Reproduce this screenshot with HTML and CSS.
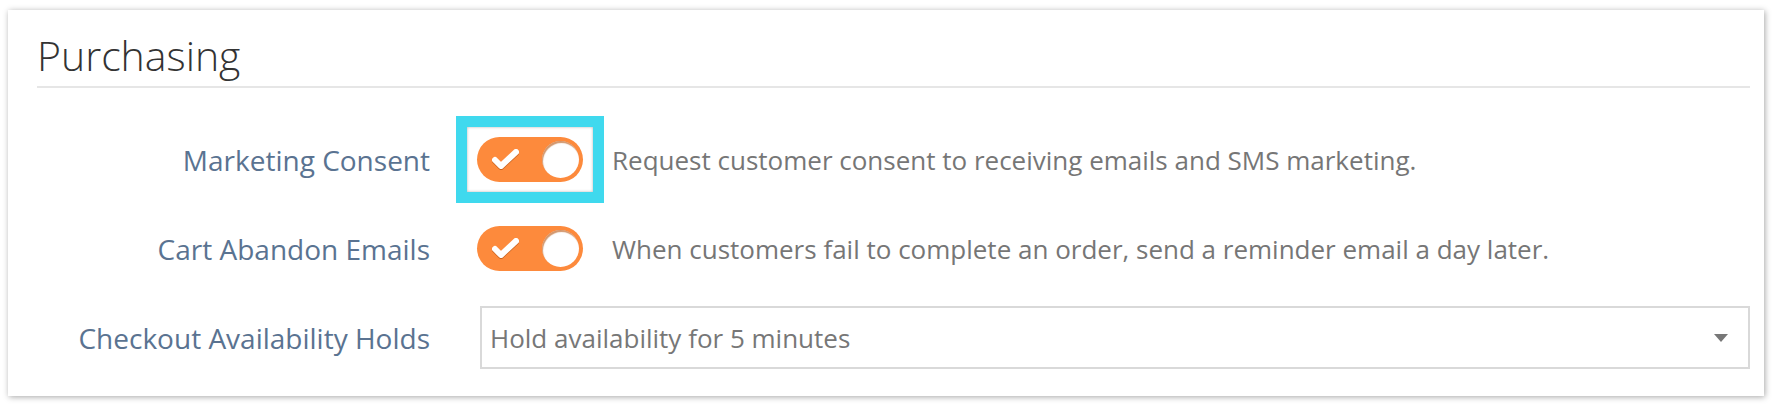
FILE: index.html
```html
<!DOCTYPE html>
<html lang="en">
<head>
  <meta charset="UTF-8" />
  <title>Purchasing Settings</title>
  <link rel="stylesheet" href="styles.css">
</head>
<body>

<div class="card">
  <h2 class="card-title">Purchasing</h2>

  <div class="settings">
    <div class="setting-row">
      <label class="setting-label">Marketing Consent</label>
      <div class="setting-control">
        <span class="highlight">
          <span class="toggle is-on">
            <svg class="toggle-check" viewBox="0 0 30 22" width="30" height="22"><polyline points="4,12 10,18 25,4" /></svg>
            <span class="toggle-knob"></span>
          </span>
        </span>
        <span class="setting-help">Request customer consent to receiving emails and SMS marketing.</span>
      </div>
    </div>

    <div class="setting-row">
      <label class="setting-label">Cart Abandon Emails</label>
      <div class="setting-control">
        <span class="toggle is-on">
          <svg class="toggle-check" viewBox="0 0 30 22" width="30" height="22"><polyline points="4,12 10,18 25,4" /></svg>
          <span class="toggle-knob"></span>
        </span>
        <span class="setting-help">When customers fail to complete an order, send a reminder email a day later.</span>
      </div>
    </div>

    <div class="setting-row">
      <label class="setting-label">Checkout Availability Holds</label>
      <div class="setting-control">
        <div class="select">
          <span class="select-value">Hold availability for 5 minutes</span>
          <span class="select-arrow"></span>
        </div>
      </div>
    </div>
  </div>
</div>

</body>
</html>
```
FILE: styles.css
```css
body {
  margin: 0;
  padding: 10px 10px 10px 8px;
  background: #fff;
  font-family: "Open Sans", "Liberation Sans", sans-serif;
}

.card {
  background: #fff;
  padding: 17px 14px 14px 29px;
  box-shadow: 1px 1px 6px rgba(0, 0, 0, 0.35);
}

.card-title {
  margin: 0;
  padding-bottom: 3px;
  font-size: 41px;
  font-weight: 300;
  color: #333;
  border-bottom: 2px solid #e6e6e6;
}

.settings {
  margin-top: 27px;
}

.setting-row {
  display: grid;
  grid-template-columns: 393px 1fr;
  column-gap: 47px;
  align-items: center;
  height: 89px;
}

.setting-label {
  text-align: right;
  font-size: 28px;
  color: #5a7391;
}

.setting-control {
  display: flex;
  align-items: center;
  gap: 29px;
}

.setting-help {
  font-size: 26px;
  color: #767676;
}

/* Annotation box drawn round the first switch */
.highlight {
  position: relative;
  display: inline-flex;
  flex: none;
}

.highlight::after {
  content: "";
  position: absolute;
  inset: -21px;
  border: 11px solid #3fd9ee;
  box-shadow: inset 0 0 3px rgba(0, 0, 0, 0.3);
}

/* On/off switch */
.toggle {
  position: relative;
  flex: none;
  width: 106px;
  height: 45px;
  border-radius: 23px;
  background: #fd8a3c;
}

.toggle-check {
  position: absolute;
  left: 14px;
  top: 11px;
  fill: none;
  stroke: #fff;
  stroke-width: 6;
  stroke-linecap: round;
  stroke-linejoin: round;
  filter: drop-shadow(0 1px 0 rgba(150, 60, 0, 0.5));
}

.toggle-knob {
  position: absolute;
  right: 4px;
  top: 4px;
  width: 37px;
  height: 37px;
  border-radius: 50%;
  background: #fff;
  box-shadow: inset 1px 2px 1px rgba(180, 80, 10, 0.6);
}

/* Dropdown */
.select {
  flex: 1;
  margin-left: 3px;
  height: 63px;
  box-sizing: border-box;
  border: 2px solid #d9d9d9;
  display: flex;
  align-items: center;
  justify-content: space-between;
  padding: 0 20px 0 8px;
}

.select-value {
  font-size: 26px;
  color: #777;
}

.select-arrow {
  width: 0;
  height: 0;
  border-left: 7px solid transparent;
  border-right: 7px solid transparent;
  border-top: 8px solid #777;
}
```
